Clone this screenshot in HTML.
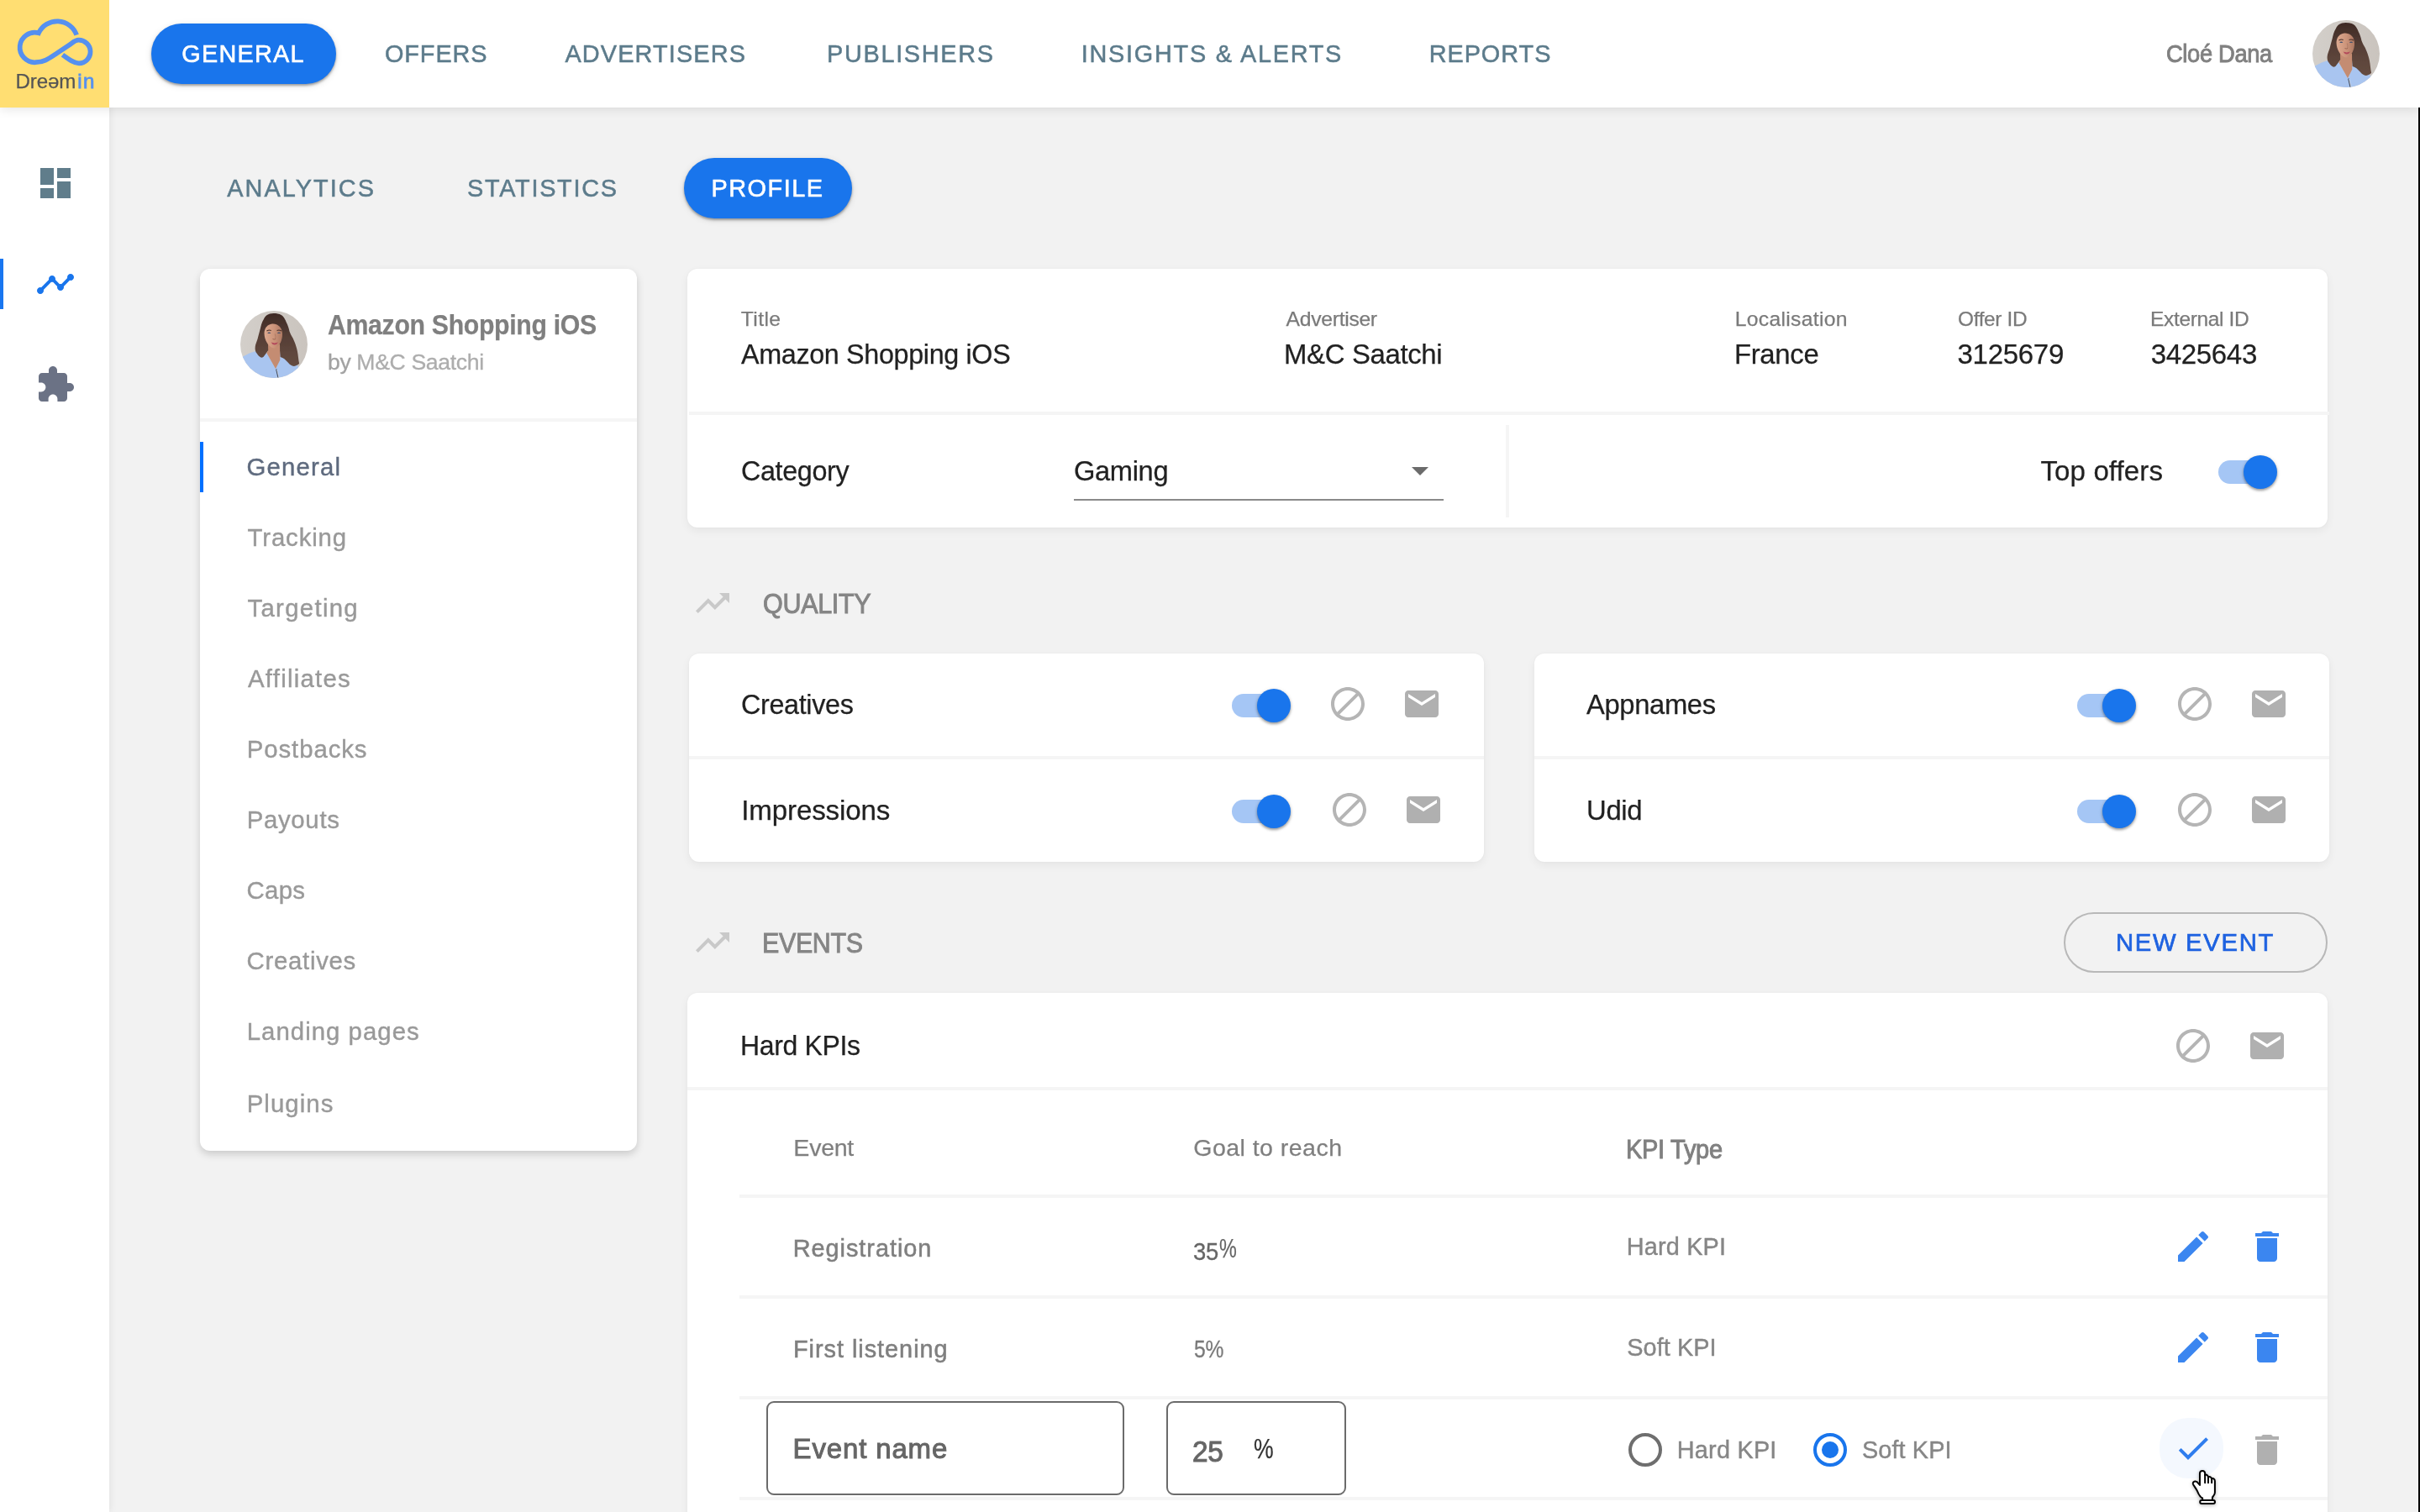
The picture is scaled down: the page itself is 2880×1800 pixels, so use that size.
<!DOCTYPE html>
<html lang="en">
<head>
<meta charset="utf-8">
<title>Dreamin – Offer profile</title>
<style>
*{box-sizing:border-box;margin:0;padding:0}
html,body{width:2880px;height:1800px;overflow:hidden;background:#F2F2F2;font-family:"Liberation Sans",sans-serif}
body{position:relative}
.abs,.t,.card,.pill,.ico,.hr,.tog,.vr{position:absolute}
.t{white-space:nowrap;line-height:1;z-index:5;transform-origin:0 50%}
header{position:absolute;left:0;top:0;width:2880px;height:128px;background:#fff;box-shadow:0 2px 12px rgba(0,0,0,.105);z-index:3}
aside.side{position:absolute;left:0;top:0;width:130px;height:1800px;background:#fff;box-shadow:2px 0 8px rgba(0,0,0,.06);z-index:2}
.logo{position:absolute;left:0;top:0;width:130px;height:128px;background:#FFDE72;z-index:4}
.pill{background:#1975EC;border-radius:36px;height:72px;box-shadow:0 2px 3px rgba(0,0,0,.34),0 2px 8px rgba(0,0,0,.11);z-index:4}
.card{background:#fff;border-radius:12px;box-shadow:0 4px 11px rgba(0,0,0,.055),0 0 3px rgba(0,0,0,.03);z-index:1}
.hr{background:#F5F5F5;height:4px;z-index:2}
.vr{background:#F5F5F5;width:4px;z-index:2}
.ico{width:48px;height:48px;z-index:4}
.ico svg{display:block;width:48px;height:48px}
.tog{width:74px;height:44px;z-index:4}
.tog i{position:absolute;left:0;top:8px;width:68px;height:28px;border-radius:14px;background:#A5C6F5}
.tog b{position:absolute;left:30px;top:2px;width:40px;height:40px;border-radius:50%;background:#1975EC;box-shadow:0 2px 3px rgba(0,0,0,.32),0 1px 5px rgba(0,0,0,.14)}
.ava{position:absolute;width:80px;height:80px;border-radius:50%;overflow:hidden;z-index:5}
.ava svg{display:block}
.inp{position:absolute;border:2px solid #6b6b6b;border-radius:9px;background:#fff;z-index:3}
.radio{position:absolute;width:40px;height:40px;border-radius:50%;border:4px solid #6e6e6e;z-index:4}
.radio.on{border-color:#1975EC}
.radio.on:after{content:"";position:absolute;left:6px;top:6px;width:20px;height:20px;border-radius:50%;background:#1975EC}
</style>
</head>
<body>
<svg width="0" height="0" style="position:absolute">
 <defs>
  <symbol id="face" viewBox="0 0 80 80">
   <linearGradient id="gsk" x1="0" x2="1" y1="0" y2="0"><stop offset="0" stop-color="#DDAA90"/><stop offset=".55" stop-color="#CC947A"/><stop offset="1" stop-color="#AC7862"/></linearGradient>
   <linearGradient id="ghr" x1="0" x2="0" y1="0" y2="1"><stop offset="0" stop-color="#3E2A25"/><stop offset=".45" stop-color="#563F36"/><stop offset="1" stop-color="#654C41"/></linearGradient>
   <linearGradient id="gbg" x1="0" x2="1" y1="0" y2="0"><stop offset="0" stop-color="#D3CFCA"/><stop offset="1" stop-color="#CAC4BE"/></linearGradient>
   <filter id="fb" x="-10%" y="-10%" width="120%" height="120%"><feGaussianBlur stdDeviation="0.55"/></filter>
   <rect width="80" height="80" fill="url(#gbg)"/>
   <g filter="url(#fb)">
   <path d="M-2 58C3 54 12 49.500 17.700 48.200C22 49 27 50 31.700 50.600L42 68.900L47 58.500L47 50L62 52L68.900 67L78 60L84 84H-4Z" fill="#A9C5F0"/>
   <path d="M39.600 3C33 3 29.500 6 28 9.800C25.500 14 24.500 18 23.800 21.300C22.500 26 21.500 30 20.700 33C19.500 37 18 40 17.700 42.700C17.300 46 18 49 19.500 50.600C21 53 23 55 24.400 55.500C26 56 27.500 55 28 54.300L33 47.600L47 47.600L47.600 54.900C49.500 55.500 51 56.200 52.400 57.300C54.500 59 56.500 61.500 58.500 63.400C60.500 65 62 65.800 64 65.900C66.500 65.500 68.500 64.500 70.100 62.800C69.500 60 69.300 57.500 68.900 54.900C68.500 50 67.500 46 66.500 42.700C65.500 39 64 36 62.800 33C61 30 59.500 27 58.500 24.400C57.500 20 56.500 17 54.900 14C53.500 10 51.500 6.500 48.800 4.900C46 3.400 43 3 39.600 3Z" fill="url(#ghr)"/>
   <path d="M33 40L47 40L47.300 58.500L42 68.900L31.500 50.600L33.200 47Z" fill="#C48C72"/>
   <path d="M28.500 27C28.500 21 32 16 38 15.500C44 15 49.500 19 50 27C50.300 33 48 39 44.500 42.500C42.500 44.500 40 45 38 44C33 41.500 28.800 35 28.500 27Z" fill="url(#gsk)"/>
   <path d="M36.600 37.600q4.200 1.600 8.500 0q-1.500 2.800-4.300 2.800t-4.200-2.800z" fill="#B3485B"/>
   <path d="M32.200 26.400q2-1.700 4.200 0q-2.100 1.300-4.200 0zM43.900 26.400q2.100-1.700 4.300 0q-2.200 1.300-4.300 0z" fill="#46526e"/>
   <path d="M31.500 24q2.500-1.600 5.200-.6M43.600 23.400q2.800-1 5.300.6" stroke="#4a2f28" stroke-width="1.100" fill="none"/>
   <path d="M38.500 33.500q1.700 1.100 3.600 0" stroke="#94604c" stroke-width=".9" fill="none"/><path d="M41.200 27.500q1.200 3 .6 5.400" stroke="#b07c66" stroke-width="1" fill="none"/>
   </g>
   <path d="M42.800 69.500L45.200 80" stroke="#3b4658" stroke-width="1.300" fill="none"/>
   <path d="M43.600 70L46 80" stroke="#eef2f8" stroke-width=".6" fill="none"/>
  </symbol>
  <symbol id="i-block" viewBox="0 0 24 24"><path d="M12 2C6.48 2 2 6.48 2 12s4.48 10 10 10 10-4.48 10-10S17.52 2 12 2zM4 12c0-4.42 3.58-8 8-8 1.85 0 3.55.63 4.9 1.69L5.69 16.9C4.63 15.55 4 13.85 4 12zm8 8c-1.85 0-3.55-.63-4.9-1.69L18.31 7.1C19.37 8.45 20 10.15 20 12c0 4.42-3.58 8-8 8z"/></symbol>
  <symbol id="i-mail" viewBox="0 0 24 24"><path d="M20 4H4c-1.1 0-1.99.9-1.99 2L2 18c0 1.1.9 2 2 2h16c1.1 0 2-.9 2-2V6c0-1.1-.9-2-2-2zm0 4l-8 5-8-5V6l8 5 8-5v2z"/></symbol>
  <symbol id="i-trend" viewBox="0 0 24 24"><path d="M16 6l2.29 2.29-4.88 4.88-4-4L2 16.59 3.41 18l6-6 4 4 6.3-6.29L22 12V6z"/></symbol>
  <symbol id="i-edit" viewBox="0 0 24 24"><path d="M3 17.25V21h3.75L17.81 9.94l-3.75-3.75L3 17.25zM20.71 7.04c.39-.39.39-1.02 0-1.41l-2.34-2.34c-.39-.39-1.02-.39-1.41 0l-1.83 1.83 3.75 3.75 1.83-1.83z"/></symbol>
  <symbol id="i-del" viewBox="0 0 24 24"><path d="M6 19c0 1.1.9 2 2 2h8c1.1 0 2-.9 2-2V7H6v12zM19 4h-3.5l-1-1h-5l-1 1H5v2h14V4z"/></symbol>
  <symbol id="i-check" viewBox="0 0 24 24"><path d="M9 16.17L4.83 12l-1.42 1.41L9 19 21 7l-1.41-1.41z"/></symbol>
 </defs>
</svg>

<!-- ===== top bar ===== -->
<header></header>
<div class="logo">
 <svg width="130" height="128" viewBox="0 0 1405 1383" style="display:block">
  <path d="M985 450A264 264 0 0 0 497 425A192 192 0 1 0 460 802C570 802 640 745 740 680L890 580C930 553 965 515 1010 515A150 150 0 1 1 1015 815C950 815 880 760 805 705" fill="none" stroke="#5590F0" stroke-width="62" stroke-linejoin="miter"/>
 </svg>
</div>
<nav>
 <div class="pill" style="left:180px;top:28px;width:220px"></div>
</nav>
<div class="ava" style="left:2752px;top:24px"><svg width="80" height="80"><use href="#face"/></svg></div>

<!-- ===== side bar ===== -->
<aside class="side"></aside>
<div class="abs" style="left:0;top:308px;width:4px;height:60px;background:#1976F0;z-index:4"></div>
<div class="ico" style="left:42px;top:194px"><svg viewBox="0 0 24 24" fill="#607D8B"><path d="M3 13h8V3H3v10zm0 8h8v-6H3v6zm10 0h8V11h-8v10zm0-18v6h8V3h-8z"/></svg></div>
<div class="ico" style="left:42px;top:314px"><svg viewBox="0 0 24 24" fill="#1975EC"><path d="M23 8c0 1.1-.9 2-2 2-.18 0-.35-.02-.51-.07l-3.56 3.55c.05.16.07.34.07.52 0 1.1-.9 2-2 2s-2-.9-2-2c0-.18.02-.36.07-.52l-2.55-2.55c-.16.05-.34.07-.52.07s-.36-.02-.52-.07l-4.55 4.56c.05.16.07.33.07.51 0 1.1-.9 2-2 2s-2-.9-2-2 .9-2 2-2c.18 0 .35.02.51.07l4.56-4.55C8.02 9.36 8 9.18 8 9c0-1.1.9-2 2-2s2 .9 2 2c0 .18-.02.36-.07.52l2.55 2.55c.16-.05.34-.07.52-.07s.36.02.52.07l3.55-3.56C19.02 8.35 19 8.18 19 8c0-1.1.9-2 2-2s2 .9 2 2z"/></svg></div>
<div class="ico" style="left:42px;top:434px"><svg viewBox="0 0 24 24" fill="#6B7285"><path d="M20.5 11H19V7c0-1.1-.9-2-2-2h-4V3.5C13 2.12 11.88 1 10.5 1S8 2.12 8 3.5V5H4c-1.1 0-1.99.9-1.99 2v3.8H3.5c1.49 0 2.7 1.21 2.7 2.7s-1.21 2.7-2.7 2.7H2V20c0 1.1.9 2 2 2h3.8v-1.5c0-1.49 1.21-2.7 2.7-2.7 1.49 0 2.7 1.21 2.7 2.7V22H17c1.1 0 2-.9 2-2v-4h1.5c1.38 0 2.5-1.12 2.5-2.5S21.88 11 20.5 11z"/></svg></div>

<!-- ===== sub nav ===== -->
<div class="pill" style="left:814px;top:188px;width:200px"></div>

<!-- ===== left card ===== -->
<section class="card" style="left:238px;top:320px;width:520px;height:1050px;box-shadow:0 4px 10px rgba(0,0,0,.17)"></section>
<div class="ava" style="left:286px;top:370px"><svg width="80" height="80"><use href="#face"/></svg></div>
<div class="hr" style="left:238px;top:498px;width:520px"></div>
<div class="abs" style="left:238px;top:526px;width:4px;height:60px;background:#0070FF;z-index:4"></div>

<!-- ===== info card ===== -->
<section class="card" style="left:818px;top:320px;width:1952px;height:308px"></section>
<div class="hr" style="left:820px;top:490px;width:1952px"></div>
<div class="vr" style="left:1792px;top:506px;height:110px"></div>
<div class="abs" style="left:1278px;top:594px;width:440px;height:2px;background:#8a8a8a;z-index:3"></div>
<svg class="abs" style="left:1680px;top:556px;z-index:3" width="20" height="10"><path d="M0 0h20L10 10z" fill="#6b6b6b"/></svg>
<div class="tog" style="left:2640px;top:540px"><i></i><b></b></div>

<!-- ===== quality ===== -->
<div class="ico" style="left:824px;top:694px"><svg fill="#C9C9C9"><use href="#i-trend"/></svg></div>
<section class="card" style="left:820px;top:778px;width:946px;height:248px"></section>
<section class="card" style="left:1826px;top:778px;width:946px;height:248px"></section>
<div class="hr" style="left:820px;top:900px;width:946px"></div>
<div class="hr" style="left:1826px;top:900px;width:946px"></div>
<div class="tog" style="left:1466px;top:818px"><i></i><b></b></div>
<div class="tog" style="left:1466px;top:944px"><i></i><b></b></div>
<div class="tog" style="left:2472px;top:818px"><i></i><b></b></div>
<div class="tog" style="left:2472px;top:944px"><i></i><b></b></div>
<div class="ico" style="left:1580px;top:814px"><svg fill="#B5B5B5"><use href="#i-block"/></svg></div>
<div class="ico" style="left:1668px;top:814px"><svg fill="#B0B0B0"><use href="#i-mail"/></svg></div>
<div class="ico" style="left:1582px;top:940px"><svg fill="#B5B5B5"><use href="#i-block"/></svg></div>
<div class="ico" style="left:1670px;top:940px"><svg fill="#B0B0B0"><use href="#i-mail"/></svg></div>
<div class="ico" style="left:2588px;top:814px"><svg fill="#B5B5B5"><use href="#i-block"/></svg></div>
<div class="ico" style="left:2676px;top:814px"><svg fill="#B0B0B0"><use href="#i-mail"/></svg></div>
<div class="ico" style="left:2588px;top:940px"><svg fill="#B5B5B5"><use href="#i-block"/></svg></div>
<div class="ico" style="left:2676px;top:940px"><svg fill="#B0B0B0"><use href="#i-mail"/></svg></div>

<!-- ===== events ===== -->
<div class="ico" style="left:824px;top:1098px"><svg fill="#C9C9C9"><use href="#i-trend"/></svg></div>
<div class="abs" style="left:2456px;top:1086px;width:314px;height:72px;border:2px solid #B8B8B8;border-radius:36px;z-index:2"></div>
<section class="card" style="left:818px;top:1182px;width:1952px;height:700px"></section>
<div class="hr" style="left:818px;top:1294px;width:1952px"></div>
<div class="ico" style="left:2586px;top:1221px"><svg fill="#B5B5B5"><use href="#i-block"/></svg></div>
<div class="ico" style="left:2674px;top:1221px"><svg fill="#B0B0B0"><use href="#i-mail"/></svg></div>
<div class="hr" style="left:880px;top:1422px;width:1890px"></div>
<div class="hr" style="left:880px;top:1542px;width:1890px"></div>
<div class="hr" style="left:880px;top:1662px;width:1890px"></div>
<div class="hr" style="left:880px;top:1782px;width:1890px"></div>
<div class="ico" style="left:2586px;top:1460px"><svg fill="#3B86F0"><use href="#i-edit"/></svg></div>
<div class="ico" style="left:2674px;top:1460px"><svg fill="#3B86F0"><use href="#i-del"/></svg></div>
<div class="ico" style="left:2586px;top:1580px"><svg fill="#3B86F0"><use href="#i-edit"/></svg></div>
<div class="ico" style="left:2674px;top:1580px"><svg fill="#3B86F0"><use href="#i-del"/></svg></div>
<div class="inp" style="left:912px;top:1668px;width:426px;height:112px"></div>
<div class="inp" style="left:1388px;top:1668px;width:214px;height:112px"></div>
<div class="radio" style="left:1938px;top:1706px"></div>
<div class="radio on" style="left:2158px;top:1706px"></div>
<div class="abs" style="left:2570px;top:1688px;width:76px;height:72px;border-radius:34px;background:#F4F8FE;z-index:3"></div>
<div class="ico" style="left:2586px;top:1700px"><svg fill="#2F7DEE"><use href="#i-check"/></svg></div>
<div class="ico" style="left:2674px;top:1702px"><svg fill="#B0B0B0"><use href="#i-del"/></svg></div>
<svg class="abs" style="left:2600px;top:1744px;z-index:9;filter:drop-shadow(0 1px 2px rgba(0,0,0,.3))" width="48" height="56" viewBox="0 0 48 56">
 <path d="M21.300 41L21.100 39.500C19.800 38.800 19.200 38.300 18.600 37.500C17.600 36.300 17 35.400 16.500 34.400C15.800 32.900 15.100 31.400 14.400 29.900C13.400 28.200 12.300 26.600 11.300 25.100C10.600 24.200 10 23.300 9.800 22.400C9.600 20.600 11 19.300 12.700 19.400C13.500 19.500 14.200 19.800 14.800 20.300L17.950 23.900L17.950 10A3.100 3.100 0 0 1 24.140 10L24.140 12.200C25.300 10.900 27.700 12 28 14.800C28.800 13.200 31.700 13.900 32.150 16.700C33.200 15.100 35.900 16.300 35.900 19.300L35.900 32.700C35.800 34.200 35.200 35.400 34.400 36.500C33.900 37.200 33.400 37.800 33 38.500L32.800 41" fill="#fff" stroke="#000" stroke-width="2" stroke-linejoin="round"/>
 <path d="M24.140 11.500V21.300M28 14.800V21.300M32.150 16.700V21.300" stroke="#000" stroke-width="2" fill="none" stroke-linecap="round"/>
 <rect x="18.200" y="41.950" width="17.800" height="3.950" rx="1.980" fill="#fff" stroke="#000" stroke-width="2"/>
</svg>

<!-- right edge strip -->
<div class="abs" style="left:2878px;top:128px;width:2px;height:1672px;background:#000;z-index:6"></div>

<!-- ===== text ===== -->
<div id="txt" style="position:absolute;left:0;top:0;width:2880px;height:1800px;will-change:transform;z-index:5">
<div class="t" id="t0" style="left:216.25px;top:49.90px;font-size:28.85px;letter-spacing:1.231px;color:#fff;-webkit-text-stroke:0.6px #fff">GENERAL</div>
<div class="t" id="t1" style="left:457.95px;top:49.90px;font-size:28.85px;letter-spacing:0.932px;color:#5C7B8B;-webkit-text-stroke:0.5px #5C7B8B">OFFERS</div>
<div class="t" id="t2" style="left:672.40px;top:49.90px;font-size:28.85px;letter-spacing:1.153px;color:#5C7B8B;-webkit-text-stroke:0.5px #5C7B8B">ADVERTISERS</div>
<div class="t" id="t3" style="left:984.05px;top:49.90px;font-size:28.85px;letter-spacing:1.688px;color:#5C7B8B;-webkit-text-stroke:0.5px #5C7B8B">PUBLISHERS</div>
<div class="t" id="t4" style="left:1286.75px;top:49.90px;font-size:28.85px;letter-spacing:1.752px;color:#5C7B8B;-webkit-text-stroke:0.5px #5C7B8B">INSIGHTS &amp; ALERTS</div>
<div class="t" id="t5" style="left:1700.65px;top:49.90px;font-size:28.85px;letter-spacing:0.971px;color:#5C7B8B;-webkit-text-stroke:0.5px #5C7B8B">REPORTS</div>
<div class="t" id="t6" style="left:2578.12px;top:49.90px;font-size:28.85px;letter-spacing:-0.350px;color:#808080;transform:scaleX(0.9460);-webkit-text-stroke:0.9px #808080">Cloé Dana</div>
<div class="t" id="t7" style="left:270.30px;top:209.90px;font-size:28.85px;letter-spacing:2.066px;color:#5C7B8B;-webkit-text-stroke:0.5px #5C7B8B">ANALYTICS</div>
<div class="t" id="t8" style="left:556.10px;top:209.90px;font-size:28.85px;letter-spacing:1.721px;color:#5C7B8B;-webkit-text-stroke:0.5px #5C7B8B">STATISTICS</div>
<div class="t" id="t9" style="left:846.45px;top:209.90px;font-size:28.85px;letter-spacing:1.520px;color:#fff;-webkit-text-stroke:0.6px #fff">PROFILE</div>
<div class="t" id="t10" style="left:389.53px;top:369.81px;font-size:33.07px;letter-spacing:-0.350px;color:#7f7f7f;transform:scaleX(0.9148);font-weight:700;-webkit-text-stroke:0.25px #7f7f7f">Amazon Shopping iOS</div>
<div class="t" id="t11" style="left:389.94px;top:417.90px;font-size:26.60px;letter-spacing:-0.350px;color:#ADADAD;-webkit-text-stroke:0.3px #ADADAD"><span style="color:#a2a2a2;-webkit-text-stroke-color:#a2a2a2">by</span> M&amp;C Saatchi</div>
<div class="t" id="t12" style="left:293.62px;top:540.95px;font-size:29.36px;letter-spacing:1.143px;color:#5E6A7E;-webkit-text-stroke:0.4px #5E6A7E">General</div>
<div class="t" id="t13" style="left:294.54px;top:624.95px;font-size:29.36px;letter-spacing:0.874px;color:#999;-webkit-text-stroke:0.4px #999">Tracking</div>
<div class="t" id="t14" style="left:294.54px;top:708.85px;font-size:29.36px;letter-spacing:1.291px;color:#999;-webkit-text-stroke:0.4px #999">Targeting</div>
<div class="t" id="t15" style="left:295.00px;top:792.95px;font-size:29.36px;letter-spacing:1.254px;color:#999;-webkit-text-stroke:0.4px #999">Affiliates</div>
<div class="t" id="t16" style="left:293.71px;top:876.85px;font-size:29.36px;letter-spacing:0.921px;color:#999;-webkit-text-stroke:0.4px #999">Postbacks</div>
<div class="t" id="t17" style="left:293.71px;top:960.95px;font-size:29.36px;letter-spacing:0.688px;color:#999;-webkit-text-stroke:0.4px #999">Payouts</div>
<div class="t" id="t18" style="left:293.62px;top:1045.25px;font-size:29.36px;letter-spacing:0.251px;color:#999;-webkit-text-stroke:0.4px #999">Caps</div>
<div class="t" id="t19" style="left:293.62px;top:1129.25px;font-size:29.36px;letter-spacing:0.711px;color:#999;-webkit-text-stroke:0.4px #999">Creatives</div>
<div class="t" id="t20" style="left:293.71px;top:1213.25px;font-size:29.36px;letter-spacing:1.030px;color:#999;-webkit-text-stroke:0.4px #999">Landing pages</div>
<div class="t" id="t21" style="left:293.71px;top:1299.25px;font-size:29.36px;letter-spacing:1.053px;color:#999;-webkit-text-stroke:0.4px #999">Plugins</div>
<div class="t" id="t22" style="left:881.70px;top:367.81px;font-size:24.71px;letter-spacing:0.395px;color:#7a7a7a;-webkit-text-stroke:0.25px #7a7a7a">Title</div>
<div class="t" id="t23" style="left:882.30px;top:404.75px;font-size:33.07px;letter-spacing:-0.350px;color:#212121;transform:scaleX(0.9771);-webkit-text-stroke:0.25px #212121">Amazon Shopping iOS</div>
<div class="t" id="t24" style="left:1530.60px;top:367.81px;font-size:24.71px;letter-spacing:-0.300px;color:#7a7a7a;-webkit-text-stroke:0.25px #7a7a7a">Advertiser</div>
<div class="t" id="t25" style="left:1528.03px;top:404.75px;font-size:33.07px;letter-spacing:-0.350px;color:#212121;transform:scaleX(0.9956);-webkit-text-stroke:0.25px #212121">M&amp;C Saatchi</div>
<div class="t" id="t26" style="left:2064.80px;top:367.81px;font-size:24.71px;letter-spacing:0.295px;color:#7a7a7a;-webkit-text-stroke:0.25px #7a7a7a">Localisation</div>
<div class="t" id="t27" style="left:2064.23px;top:404.75px;font-size:33.07px;letter-spacing:-0.350px;color:#212121;transform:scaleX(0.9954);-webkit-text-stroke:0.25px #212121">France</div>
<div class="t" id="t28" style="left:2329.51px;top:367.81px;font-size:24.71px;letter-spacing:-0.350px;color:#7a7a7a;transform:scaleX(0.9883);-webkit-text-stroke:0.25px #7a7a7a">Offer ID</div>
<div class="t" id="t29" style="left:2329.57px;top:404.75px;font-size:33.07px;letter-spacing:-0.328px;color:#212121;-webkit-text-stroke:0.25px #212121">3125679</div>
<div class="t" id="t30" style="left:2558.72px;top:367.81px;font-size:24.71px;letter-spacing:-0.350px;color:#7a7a7a;transform:scaleX(0.9924);-webkit-text-stroke:0.25px #7a7a7a">External ID</div>
<div class="t" id="t31" style="left:2559.67px;top:404.75px;font-size:33.07px;letter-spacing:-0.350px;color:#212121;-webkit-text-stroke:0.25px #212121">3425643</div>
<div class="t" id="t32" style="left:882.09px;top:543.75px;font-size:33.07px;letter-spacing:-0.350px;color:#212121;transform:scaleX(0.9763);-webkit-text-stroke:0.25px #212121">Category</div>
<div class="t" id="t33" style="left:1277.67px;top:543.75px;font-size:33.07px;letter-spacing:-0.350px;color:#212121;transform:scaleX(0.9870);-webkit-text-stroke:0.25px #212121">Gaming</div>
<div class="t" id="t34" style="left:2428.48px;top:543.75px;font-size:33.07px;letter-spacing:0.104px;color:#212121;-webkit-text-stroke:0.25px #212121">Top offers</div>
<div class="t" id="t35" style="left:907.77px;top:703.00px;font-size:32.70px;letter-spacing:-0.350px;color:#858585;transform:scaleX(0.9343);-webkit-text-stroke:0.95px #858585">QUALITY</div>
<div class="t" id="t36" style="left:906.82px;top:1106.20px;font-size:32.99px;letter-spacing:-0.350px;color:#858585;transform:scaleX(0.9218);-webkit-text-stroke:0.95px #858585">EVENTS</div>
<div class="t" id="t37" style="left:882.08px;top:821.91px;font-size:33.07px;letter-spacing:-0.350px;color:#212121;transform:scaleX(0.9777);-webkit-text-stroke:0.25px #212121">Creatives</div>
<div class="t" id="t38" style="left:882.31px;top:947.91px;font-size:33.14px;letter-spacing:-0.162px;color:#212121;-webkit-text-stroke:0.25px #212121">Impressions</div>
<div class="t" id="t39" style="left:1888.30px;top:821.91px;font-size:33.07px;letter-spacing:-0.350px;color:#212121;transform:scaleX(0.9902);-webkit-text-stroke:0.25px #212121">Appnames</div>
<div class="t" id="t40" style="left:1887.94px;top:947.91px;font-size:33.14px;letter-spacing:-0.350px;color:#212121;transform:scaleX(0.9925);-webkit-text-stroke:0.25px #212121">Udid</div>
<div class="t" id="t41" style="left:2518.02px;top:1108.11px;font-size:29.22px;letter-spacing:1.697px;color:#1E62E0;-webkit-text-stroke:0.7px #1E62E0">NEW EVENT</div>
<div class="t" id="t42" style="left:881.00px;top:1227.95px;font-size:33.07px;letter-spacing:-0.350px;color:#212121;transform:scaleX(0.9668);-webkit-text-stroke:0.25px #212121">Hard KPIs</div>
<div class="t" id="t43" style="left:944.37px;top:1351.76px;font-size:28.56px;letter-spacing:-0.274px;color:#7f7f7f;-webkit-text-stroke:0.25px #7f7f7f">Event</div>
<div class="t" id="t44" style="left:1420.26px;top:1351.76px;font-size:28.56px;letter-spacing:0.449px;color:#7f7f7f;-webkit-text-stroke:0.25px #7f7f7f">Goal to reach</div>
<div class="t" id="t45" style="left:1934.53px;top:1353.60px;font-size:30.96px;letter-spacing:-0.350px;color:#808080;transform:scaleX(0.9389);-webkit-text-stroke:0.95px #808080">KPI Type</div>
<div class="t" id="t46" style="left:943.75px;top:1471.75px;font-size:28.85px;letter-spacing:0.976px;color:#7f7f7f;-webkit-text-stroke:0.55px #7f7f7f">Registration</div>
<div class="t" id="t47" style="left:1419.94px;top:1475.31px;font-size:29.65px;letter-spacing:-0.350px;color:#666;transform:scaleX(0.9245);-webkit-text-stroke:0.3px #666">35</div>
<div class="t" id="t48" style="left:1450.87px;top:1470.51px;font-size:30.52px;letter-spacing:0.000px;color:#666;transform:scaleX(0.7676);-webkit-text-stroke:0.25px #666">%</div>
<div class="t" id="t49" style="left:1935.75px;top:1470.30px;font-size:28.85px;letter-spacing:0.173px;color:#868686;-webkit-text-stroke:0.4px #868686">Hard KPI</div>
<div class="t" id="t50" style="left:943.95px;top:1591.75px;font-size:28.85px;letter-spacing:0.981px;color:#7f7f7f;-webkit-text-stroke:0.55px #7f7f7f">First listening</div>
<div class="t" id="t51" style="left:1421.33px;top:1591.90px;font-size:29.07px;letter-spacing:-0.350px;color:#7a7a7a;transform:scaleX(0.8473);-webkit-text-stroke:0.3px #7a7a7a">5%</div>
<div class="t" id="t52" style="left:1936.30px;top:1590.30px;font-size:28.85px;letter-spacing:0.068px;color:#868686;-webkit-text-stroke:0.4px #868686">Soft KPI</div>
<div class="t" id="t53" style="left:943.62px;top:1707.91px;font-size:32.99px;letter-spacing:0.852px;color:#666;-webkit-text-stroke:1.0px #666">Event name</div>
<div class="t" id="t54" style="left:1419.23px;top:1711.01px;font-size:34.30px;letter-spacing:-0.350px;color:#666;transform:scaleX(0.9740);-webkit-text-stroke:1.0px #666">25</div>
<div class="t" id="t55" style="left:1491.57px;top:1707.91px;font-size:32.99px;letter-spacing:0.000px;color:#333;transform:scaleX(0.8053);-webkit-text-stroke:0.25px #333">%</div>
<div class="t" id="t56" style="left:1995.75px;top:1712.15px;font-size:28.85px;letter-spacing:0.230px;color:#868686;-webkit-text-stroke:0.4px #868686">Hard KPI</div>
<div class="t" id="t57" style="left:2215.90px;top:1712.15px;font-size:28.85px;letter-spacing:0.125px;color:#868686;-webkit-text-stroke:0.4px #868686">Soft KPI</div>
<div class="t" id="t58" style="left:18.50px;top:84.61px;font-size:24.13px;letter-spacing:-0.125px;color:#555;-webkit-text-stroke:0.25px #555">Dreəm</div>
<div class="t" id="t59" style="left:92.20px;top:84.61px;font-size:24.13px;letter-spacing:1.539px;color:#5590F0;-webkit-text-stroke:0.8px #5590F0">in</div>
</div>
</body>
</html>
